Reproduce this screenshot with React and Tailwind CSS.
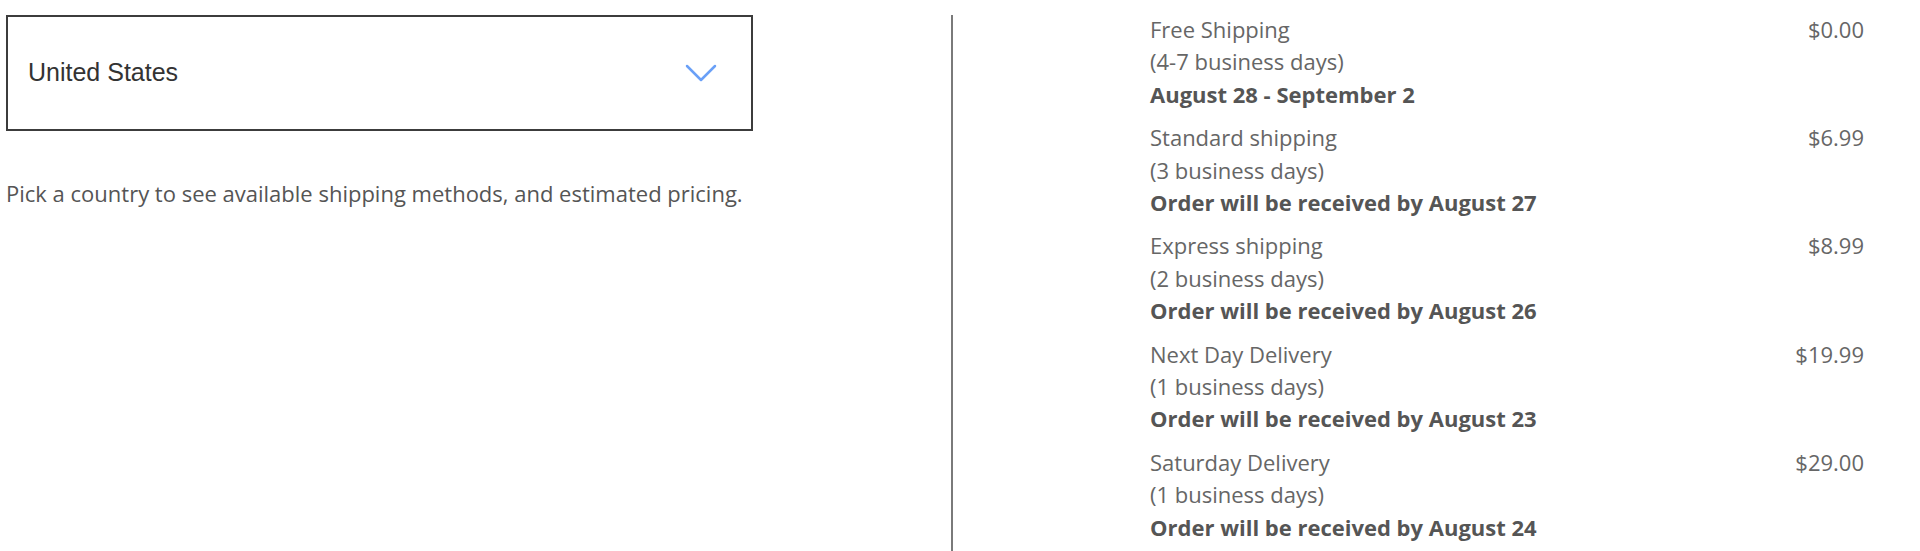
import React from 'react'

const methods = [
  { name: 'Free Shipping', days: '(4-7 business days)', eta: 'August 28 - September 2', price: '$0.00' },
  { name: 'Standard shipping', days: '(3 business days)', eta: 'Order will be received by August 27', price: '$6.99' },
  { name: 'Express shipping', days: '(2 business days)', eta: 'Order will be received by August 26', price: '$8.99' },
  { name: 'Next Day Delivery', days: '(1 business days)', eta: 'Order will be received by August 23', price: '$19.99' },
  { name: 'Saturday Delivery', days: '(1 business days)', eta: 'Order will be received by August 24', price: '$29.00' },
]

const Chevron = () => (
  <svg width="32" height="18" viewBox="0 0 32 18" fill="none" stroke="#6aa0f7" strokeWidth="2.5" strokeLinecap="round" strokeLinejoin="round" aria-hidden>
    <polyline points="2,2 16,16 30,2" />
  </svg>
)

const App = () => {
  return (
    <div className="h-[551px] w-[1920px] overflow-hidden bg-white flex items-start font-['Open_Sans',sans-serif]">
      <div className="ml-[6px] mt-[15px] w-[747px]">
        <div className="h-[116px] border-2 border-[#3c3c3c] flex items-center justify-between pl-[20px] pr-[34px]">
          <span className="font-['Liberation_Sans',Arial,sans-serif] text-[25px] text-[#333]">United States</span>
          <Chevron />
        </div>
        <p className="mt-[46px] text-[22px] leading-[32px] text-[#555] whitespace-nowrap">
          Pick a country to see available shipping methods, and estimated pricing.
        </p>
      </div>

      <div className="ml-[198px] mt-[15px] w-[2px] h-[536px] bg-[#7a7a7a]" />

      <ul className="ml-[197px] pt-[13px] w-[714px] flex flex-col gap-[11px]">
        {methods.map((m) => (
          <li key={m.name} className="flex justify-between text-[22px] leading-[32.4px]">
            <div>
              <div className="text-[#666]">{m.name}</div>
              <div className="text-[#666]">{m.days}</div>
              <div className="font-bold text-[#555]">{m.eta}</div>
            </div>
            <div className="text-[#666]">{m.price}</div>
          </li>
        ))}
      </ul>
    </div>
  )
}

export default App
